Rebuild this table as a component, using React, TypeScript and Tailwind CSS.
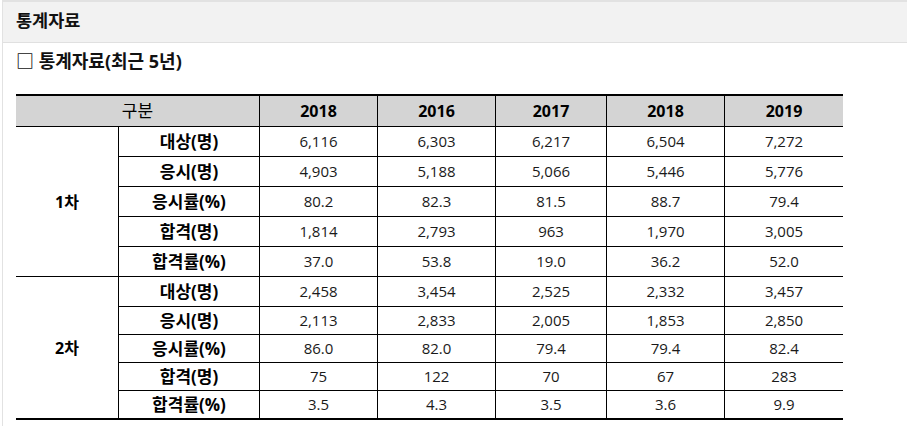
import React from "react";

const years = ["2018", "2016", "2017", "2018", "2019"];
const labels = ["대상(명)", "응시(명)", "응시률(%)", "합격(명)", "합격률(%)"];
const g1 = [
  ["6,116", "6,303", "6,217", "6,504", "7,272"],
  ["4,903", "5,188", "5,066", "5,446", "5,776"],
  ["80.2", "82.3", "81.5", "88.7", "79.4"],
  ["1,814", "2,793", "963", "1,970", "3,005"],
  ["37.0", "53.8", "19.0", "36.2", "52.0"],
];
const g2 = [
  ["2,458", "3,454", "2,525", "2,332", "3,457"],
  ["2,113", "2,833", "2,005", "1,853", "2,850"],
  ["86.0", "82.0", "79.4", "79.4", "82.4"],
  ["75", "122", "70", "67", "283"],
  ["3.5", "4.3", "3.5", "3.6", "9.9"],
];

function Group({ name, rows, last }: { name: string; rows: string[][]; last: boolean }) {
  return (
    <>
      <div
        className={`row-span-5 flex items-center justify-center text-[16px] font-bold text-black ${last ? "" : "border-b border-black"}`}
      >
        {name}
      </div>
      {rows.map((r, i) => {
        const isLast = last && i === rows.length - 1;
        const bb = isLast ? "" : "border-b border-black";
        return (
          <React.Fragment key={i}>
            <div className={`flex items-center justify-center border-l border-black text-[17px] font-bold text-black ${bb}`}>
              {labels[i]}
            </div>
            {r.map((v, j) => (
              <div key={j} className={`flex items-center justify-center border-l border-black text-[#1a1a1a] ${bb}`}>
                {v}
              </div>
            ))}
          </React.Fragment>
        );
      })}
    </>
  );
}

export default function App() {
  return (
    <div className="min-h-[426px] bg-white font-['Open_Sans','Noto_Sans_CJK_KR',sans-serif] text-black">
      <div className="ml-[2px] min-h-[426px] border-l border-t-2 border-[#e2e2e2]">
        <div className="flex h-[41px] items-center border-b border-[#e0e0e0] bg-[#f2f2f2] pb-[3px] pl-[13px] text-[17.5px] font-bold text-[#111]">
          통계자료
        </div>
        <div className="pl-[13px] pt-[8px]">
          <div className="flex h-[20px] items-center text-[18px] font-bold text-[#111]">□ 통계자료(최근 5년)</div>
          <div
            className="mt-[23px] grid w-[827px] border-y-2 border-black text-[15px]"
            style={{
              gridTemplateColumns: "102px 141px 118px 118px 111px 118px 119px",
              gridTemplateRows: "31px 30px 30px 30px 30px 30px 30px 28px 28px 28px 27px",
            }}
          >
            <div className="col-span-2 flex items-center justify-center border-b border-black bg-[#d4d4d4] text-[17px]">
              구분
            </div>
            {years.map((y, i) => (
              <div
                key={i}
                className="flex items-center justify-center border-b border-l border-black bg-[#d4d4d4] text-[16px] font-bold"
              >
                {y}
              </div>
            ))}
            <Group name="1차" rows={g1} last={false} />
            <Group name="2차" rows={g2} last={true} />
          </div>
        </div>
      </div>
    </div>
  );
}
